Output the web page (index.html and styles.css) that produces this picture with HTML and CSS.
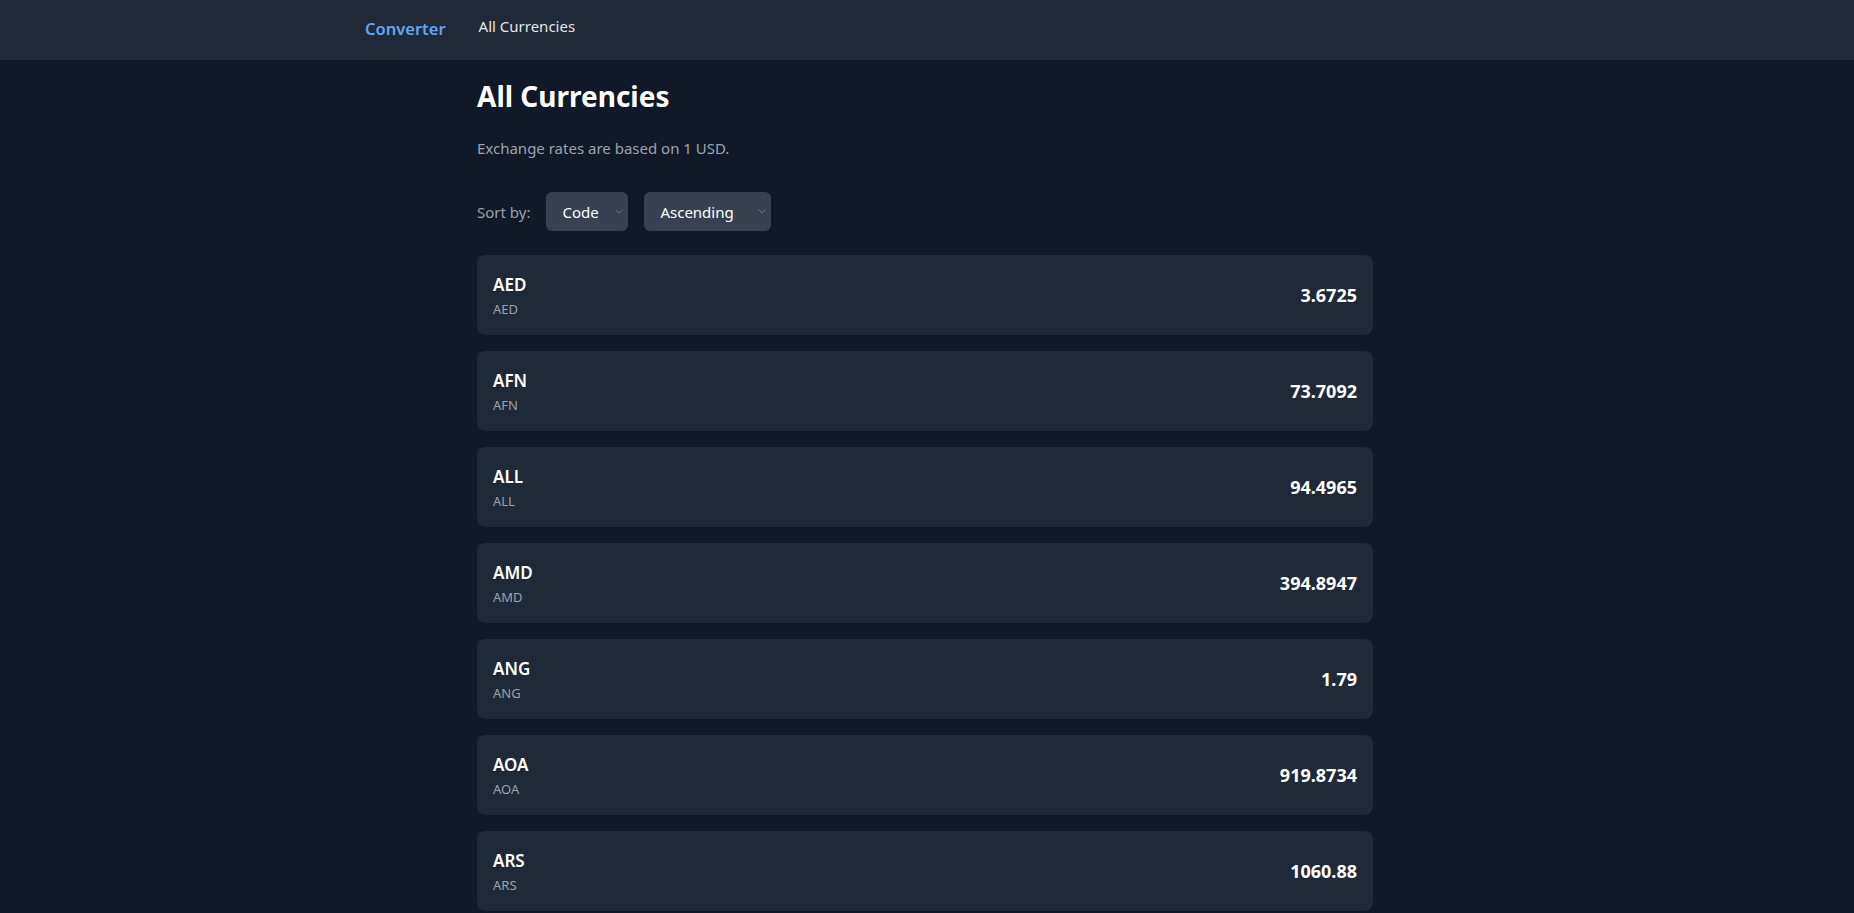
FILE: index.html
```html
<!DOCTYPE html>
<html lang="en">
<head>
<meta charset="utf-8">
<title>All Currencies</title>
<link rel="stylesheet" href="styles.css">
</head>
<body>
<header class="topbar">
  <nav class="nav">
    <a class="brand" href="#">Converter</a>
    <a class="nav-link" href="#">All Currencies</a>
  </nav>
</header>
<main class="page">
  <h1 class="title">All Currencies</h1>
  <p class="subtitle">Exchange rates are based on 1 USD.</p>
  <div class="sort-row">
    <span class="sort-label">Sort by:</span>
    <div class="select-wrap select-code">
      <select class="select"><option>Code</option><option>Rate</option></select>
      <svg class="chev" width="8" height="5" viewBox="0 0 8 5"><path d="M0.5 0.5 L4 4 L7.5 0.5" fill="none" stroke="#6b7280" stroke-width="1"/></svg>
    </div>
    <div class="select-wrap select-order">
      <select class="select"><option>Ascending</option><option>Descending</option></select>
      <svg class="chev" width="8" height="5" viewBox="0 0 8 5"><path d="M0.5 0.5 L4 4 L7.5 0.5" fill="none" stroke="#6b7280" stroke-width="1"/></svg>
    </div>
  </div>
  <ul class="list">
    <li class="card"><div class="info"><span class="code">AED</span><span class="name">AED</span></div><span class="rate">3.6725</span></li>
    <li class="card"><div class="info"><span class="code">AFN</span><span class="name">AFN</span></div><span class="rate">73.7092</span></li>
    <li class="card"><div class="info"><span class="code">ALL</span><span class="name">ALL</span></div><span class="rate">94.4965</span></li>
    <li class="card"><div class="info"><span class="code">AMD</span><span class="name">AMD</span></div><span class="rate">394.8947</span></li>
    <li class="card"><div class="info"><span class="code">ANG</span><span class="name">ANG</span></div><span class="rate">1.79</span></li>
    <li class="card"><div class="info"><span class="code">AOA</span><span class="name">AOA</span></div><span class="rate">919.8734</span></li>
    <li class="card"><div class="info"><span class="code">ARS</span><span class="name">ARS</span></div><span class="rate">1060.88</span></li>
  </ul>
</main>
</body>
</html>
```
FILE: styles.css
```css
* { box-sizing: border-box; }
html, body { margin: 0; padding: 0; }
body {
  background: #111827;
  color: #f3f4f6;
  font-family: "Noto Sans", "Open Sans", sans-serif;
  padding-right: 4px;
  min-height: 100vh;
}
.topbar {
  background: #1f2937;
  height: 60px;
  margin-right: -4px;
}
.nav {
  max-width: 1152px;
  margin: 0 auto;
  padding: 0 16px 8px;
  display: flex;
  align-items: center;
  gap: 33px;
  height: 60px;
  position: relative;
  left: -2px;
}
.nav a { text-decoration: none; }
.brand {
  color: #60a5fa;
  font-size: 16.5px;
  font-weight: 600;
  padding-top: 5px;
}
.nav-link {
  color: #e5e7eb;
  font-size: 15px;
}
.page {
  max-width: 896px;
  margin: 0 auto;
  padding: 18px 0 0;
}
.title {
  margin: 0;
  font-size: 28px;
  line-height: 36px;
  font-weight: 700;
  color: #ffffff;
}
.subtitle {
  margin: 22px 0 0;
  font-size: 15px;
  line-height: 24px;
  color: #9ca3af;
}
.sort-row {
  display: flex;
  align-items: center;
  gap: 16px;
  margin-top: 32px;
}
.sort-label {
  color: #9ca3af;
  font-size: 15px;
  margin-right: 0;
}
.select-wrap {
  position: relative;
  height: 39px;
}
.select {
  appearance: none;
  -webkit-appearance: none;
  background: #374151;
  color: #ffffff;
  border: none;
  border-radius: 6px;
  height: 39px;
  padding: 0 16px;
  font-family: inherit;
  font-size: 15px;
  outline: none;
}
.select-code .select { width: 82px; }
.select-order .select { width: 127px; }
.chev {
  position: absolute;
  right: 5px;
  top: 17px;
  pointer-events: none;
}
.list {
  list-style: none;
  margin: 24px 0 0;
  padding: 0;
  display: flex;
  flex-direction: column;
  gap: 16px;
}
.card {
  background: #1f2937;
  border-radius: 8px;
  height: 80px;
  flex: none;
  padding: 16px;
  display: flex;
  align-items: center;
  justify-content: space-between;
}
.info {
  display: flex;
  flex-direction: column;
}
.code {
  font-size: 17px;
  line-height: 28px;
  font-weight: 600;
  color: #ffffff;
}
.name {
  font-size: 13px;
  line-height: 20px;
  color: #9ca3af;
}
.rate {
  font-size: 18px;
  font-weight: 700;
  color: #ffffff;
}
```
